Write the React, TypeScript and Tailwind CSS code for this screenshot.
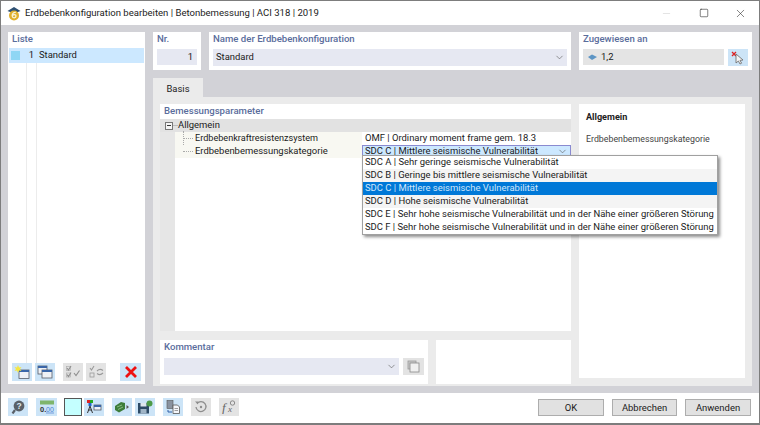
import { ChevronDown, Minus, Square, X } from 'lucide-react';

const labelCls = "text-[#5a6d9c] font-medium text-[9.6px] leading-[12px]";

const options = [
  'SDC A | Sehr geringe seismische Vulnerabilität',
  'SDC B | Geringe bis mittlere seismische Vulnerabilität',
  'SDC C | Mittlere seismische Vulnerabilität',
  'SDC D | Hohe seismische Vulnerabilität',
  'SDC E | Sehr hohe seismische Vulnerabilität und in der Nähe einer größeren Störung',
  'SDC F | Sehr hohe seismische Vulnerabilität und in der Nähe einer größeren Störung',
];

function IconBtn({ w = 'w-[20px]', off = false, children }: { w?: string; off?: boolean; children: React.ReactNode }) {
  return (
    <div className={`${w} h-[18px] flex items-center justify-center shrink-0 ${off ? 'bg-[#e3e3e3]' : 'bg-[#cce4f7]'}`}>
      <svg width="16" height="14" viewBox="0 0 16 14">{children}</svg>
    </div>
  );
}

function WindowIcon({ x, y, w = 9, h = 8 }: { x: number; y: number; w?: number; h?: number }) {
  return (
    <g>
      <rect x={x} y={y} width={w} height={h} fill="#eef1f6" stroke="#555b66" strokeWidth="0.8" />
      <rect x={x} y={y} width={w} height="2" fill="#3a66a8" />
    </g>
  );
}

export default function App() {
  return (
    <div className="w-[760px] h-[425px] flex flex-col bg-white border border-[#7d7d7d] border-b-[2px] overflow-hidden relative text-[#1a1a1a] font-['Roboto','Open_Sans',sans-serif] text-[9.45px]">
      {/* Titelleiste */}
      <div className="h-[24px] shrink-0 flex items-center pl-[6px] bg-white">
        <svg width="14" height="15" viewBox="0 0 14 15" className="mr-[4px]">
          <path d="M0.5 5 L7 1 L13.5 5 L7 7.5 Z" fill="#2f5173" />
          <circle cx="7" cy="9.5" r="5" fill="#e0b02c" />
          <path d="M8.8 6.4 C6.2 6.2 5 8 5.2 10 C5.4 12.4 9 12.4 9 10 C9 8.2 6.4 8.2 5.4 9.6" fill="none" stroke="#f8f4d8" strokeWidth="1.3" />
        </svg>
        <span className="text-[9.55px] text-[#222]">Erdbebenkonfiguration bearbeiten | Betonbemessung | ACI 318 | 2019</span>
        <div className="ml-auto flex items-center">
          <div className="w-[37px] flex justify-center"><Minus size={11} strokeWidth={1} className="text-[#c4c4c4]" /></div>
          <div className="w-[37px] flex justify-center"><Square size={10} strokeWidth={1.5} className="text-[#333]" /></div>
          <div className="w-[37px] flex justify-center"><X size={13} strokeWidth={1.1} className="text-[#333]" /></div>
        </div>
      </div>

      {/* Hauptbereich */}
      <div className="h-[368px] shrink-0 bg-[#d2d2d7] flex gap-[8px] pl-[7px] pr-[7px] pt-[7px]">
        {/* Liste */}
        <div className="w-[137px] h-[352px] bg-white flex flex-col relative">
          <div className={`${labelCls} px-[4px] pt-[1px] h-[16px]`}>Liste</div>
          <div className="h-[15px] mx-[1px] bg-[#cce8ff] flex items-center">
            <div className="w-[9px] ml-[2px] h-[9px] bg-[#8fd6f4]" />
            <span className="w-[14px] text-right">1</span>
            <span className="ml-[5px]">Standard</span>
          </div>
          <div className="flex-1 flex ml-[1px]">
            <div className="w-[18px] border-r border-[#ececec]" />
            <div className="w-[10px] border-r border-[#ececec]" />
          </div>
          <div className="h-[18px] mb-[3px] flex pl-[4px]">
            <IconBtn>
              <rect x="5" y="5" width="10" height="8.5" fill="#eef1f6" stroke="#555b66" strokeWidth="0.8" />
              <rect x="5" y="5" width="10" height="2" fill="#3a66a8" />
              <path d="M4 0 L5 2.5 L7.5 2 L6 4 L7.5 6 L5 5.5 L4 8 L3 5.5 L0.5 6 L2 4 L0.5 2 L3 2.5 Z" fill="#f5e642" />
            </IconBtn>
            <div className="w-[3px]" />
            <IconBtn>
              <WindowIcon x={1} y={1} />
              <WindowIcon x={5} y={5} w={10} />
            </IconBtn>
            <div className="w-[8px]" />
            <IconBtn off>
              <rect x="1.5" y="1.5" width="4" height="4" fill="none" stroke="#b0b0b0" strokeWidth="0.7" />
              <rect x="1.5" y="8" width="4" height="4" fill="none" stroke="#b0b0b0" strokeWidth="0.7" />
              <path d="M2 3 L3.5 5 L6 1 M2 9.5 L3.5 11.5 L6 7.5 M9 8 L11 10.5 L14.5 5.5" fill="none" stroke="#8f8f8f" strokeWidth="1.1" />
            </IconBtn>
            <div className="w-[3px]" />
            <IconBtn off>
              <path d="M2 3 L3.5 5 L6 1 M9 6 C11 4 13 4 15 5.5 M9 8.5 C11 10 13 10 15 8" fill="none" stroke="#9a9a9a" strokeWidth="1.1" />
              <rect x="2" y="8" width="4" height="4" fill="none" stroke="#9a9a9a" strokeWidth="0.8" />
            </IconBtn>
            <div className="w-[14px]" />
            <IconBtn w="w-[21px]">
              <path d="M3 2 L13 12 M13 2 L3 12" stroke="#ee1111" strokeWidth="2.8" />
            </IconBtn>
          </div>
        </div>

        {/* Rechte Seite */}
        <div className="w-[599px] flex flex-col">
          <div className="flex gap-[8px] h-[38px]">
            <div className="w-[48px] bg-white px-[4px] pt-[1px]">
              <div className={labelCls}>Nr.</div>
              <div className="mt-[4px] h-[16px] bg-[#e6e8f2] flex items-center justify-end pr-[4px]">1</div>
            </div>
            <div className="w-[362px] bg-white px-[4px] pt-[1px]">
              <div className={labelCls}>Name der Erdbebenkonfiguration</div>
              <div className="mt-[4px] h-[17px] bg-[#e6e8f2] flex items-center pl-[3px] pr-[2px]">
                <span>Standard</span>
                <ChevronDown size={11} strokeWidth={1.3} className="ml-auto text-[#555]" />
              </div>
            </div>
            <div className="w-[173px] bg-white px-[4px] pt-[1px]">
              <div className={labelCls}>Zugewiesen an</div>
              <div className="mt-[4px] flex gap-[4px]">
                <div className="w-[141px] h-[16px] bg-[#e4e4e4] flex items-center pl-[5px]">
                  <svg width="9" height="7" viewBox="0 0 9 7" className="mr-[4px]">
                    <path d="M0 3 L4 0.5 L9 3 L4 6 Z" fill="#5d95c4" />
                  </svg>
                  <span>1,2</span>
                </div>
                <div className="w-[20px] h-[17px] bg-[#cce4f7] flex items-center justify-center">
                  <svg width="14" height="14" viewBox="0 0 14 14">
                    <path d="M1 1 L5 5 M5 1 L1 5" stroke="#d22" strokeWidth="1.3" />
                    <path d="M5 3 L5 12 L7.4 10 L9 13 L10.6 12.2 L9 9.4 L12 9 Z" fill="#f4f4f4" stroke="#666" strokeWidth="0.8" />
                  </svg>
                </div>
              </div>
            </div>
          </div>

          {/* Tab */}
          <div className="mt-[8px] w-[50px] h-[19px] bg-[#ebebeb] flex items-center justify-center pt-[3px] text-[#222]">Basis</div>

          {/* Tab-Inhalt */}
          <div className="w-[599px] h-[289px] bg-[#ebebeb] flex gap-[8px] pl-[7px] pt-[7px]">
            <div className="w-[411px] flex flex-col gap-[9px]">
              <div className="h-[227px] bg-white flex flex-col relative">
                <div className={`${labelCls} h-[15px] px-[4px] pt-[1px]`}>Bemessungsparameter</div>
                <div className="h-[13px] bg-[#e2e2e2] flex items-center pl-[5px]">
                  <div className="w-[8px] h-[8px] border border-[#777] bg-[#f4f4f4] flex items-center justify-center">
                    <div className="w-[4px] h-px bg-[#333]" />
                  </div>
                  <div className="w-[5px] h-px bg-[#bbb]" />
                  <span>Allgemein</span>
                </div>
                <div className="flex-1 flex">
                  <div className="w-[15px] bg-[#e6e6e6]" />
                  <div className="flex-1 flex flex-col">
                    <div className="h-[13px] flex">
                      <div className="w-[187px] bg-[#f8f8f2] pl-[20px] flex items-center relative text-[9.1px]">
                        <div className="absolute left-[8px] top-[-1px] h-[20px] border-l border-dotted border-[#aaa]" />
                        <div className="w-[10px] absolute left-[8px] top-[6px] border-t border-dotted border-[#aaa]" />
                        Erdbebenkraftresistenzsystem
                      </div>
                      <div className="flex-1 pl-[3px] flex items-center">OMF | Ordinary moment frame gem. 18.3</div>
                    </div>
                    <div className="h-[13px] flex">
                      <div className="w-[187px] bg-[#f8f8f2] pl-[20px] flex items-center relative">
                        <div className="w-[10px] absolute left-[8px] top-[6px] border-t border-dotted border-[#aaa]" />
                        Erdbebenbemessungskategorie
                      </div>
                      <div className="flex-1 bg-[#cce8ff] border border-[#8a8ad0] pl-[2px] flex items-center">
                        <span>SDC C | Mittlere seismische Vulnerabilität</span>
                        <ChevronDown size={11} strokeWidth={1.3} className="ml-auto mr-[2px] text-[#555]" />
                      </div>
                    </div>
                  </div>
                </div>
              </div>
              <div className="flex gap-[8px] h-[44px]">
                <div className="w-[268px] bg-white px-[4px] pt-[1px]">
                  <div className={labelCls}>Kommentar</div>
                  <div className="mt-[5px] flex gap-[4px]">
                    <div className="w-[235px] h-[17px] bg-[#e6e8f2] flex items-center justify-end pr-[2px]">
                      <ChevronDown size={11} strokeWidth={1.3} className="text-[#555]" />
                    </div>
                    <div className="w-[21px] h-[17px] bg-[#e3e3e3] flex items-center justify-center">
                      <svg width="14" height="13" viewBox="0 0 14 13">
                        <rect x="1" y="1" width="8" height="8" fill="#c8c8c8" stroke="#999" strokeWidth="0.8" />
                        <rect x="3" y="3" width="9" height="9" fill="#f0f0f0" stroke="#888" strokeWidth="0.8" />
                      </svg>
                    </div>
                  </div>
                </div>
                <div className="w-[135px] bg-white" />
              </div>
            </div>
            <div className="w-[166px] h-[274px] bg-white px-[7px] pt-[7px]">
              <div className="font-bold text-[9.1px] text-[#222] leading-[13px]">Allgemein</div>
              <div className="mt-[9px] text-[8.8px] text-[#444] leading-[13px]">Erdbebenbemessungskategorie</div>
            </div>
          </div>
        </div>
      </div>

      {/* Fußleiste */}
      <div className="flex-1 flex items-start pl-[7px] pt-[5px] relative">
        <IconBtn w="w-[20px]">
          <circle cx="9" cy="6" r="5.4" fill="#5a6068" />
          <path d="M5 10 L2.5 13.5" stroke="#5a6068" strokeWidth="2.2" />
          <text x="9" y="9" fontSize="8.5" fontWeight="700" fill="#dfe8f0" textAnchor="middle" fontFamily="Liberation Sans">?</text>
        </IconBtn>
        <div className="w-[8px]" />
        <IconBtn w="w-[21px]">
          <rect x="1" y="0.5" width="14" height="4" fill="#7fb56c" />
          <text x="1" y="12" fontSize="7.5" fill="#333" fontWeight="700" fontFamily="Liberation Sans">0.</text>
          <text x="7" y="12" fontSize="7" fill="#4a7fd0" fontFamily="Liberation Sans">00</text>
          <path d="M7 13 L15 13" stroke="#4a7fd0" strokeWidth="0.7" />
        </IconBtn>
        <div className="w-[7px]" />
        <div className="w-[18px] h-[18px] bg-[#c4ffff] border border-[#555]" />
        <div className="w-[2px]" />
        <IconBtn>
          <rect x="1" y="0" width="3" height="3" fill="#d22" />
          <rect x="4" y="0" width="3" height="3" fill="#2a2" />
          <rect x="2.5" y="3" width="3" height="3" fill="#26c" />
          <path d="M4 6 L1.5 13 M4 6 L6.5 13 M2.5 10 L5.5 10" stroke="#333" strokeWidth="1" />
          <WindowIcon x={8} y={5} w={7} h={5} />
        </IconBtn>
        <div className="w-[8px]" />
        <IconBtn>
          <path d="M1 6 L7 2 L11 3 L11 9 L5 12.5 L1 10 Z" fill="#3d7d3a" />
          <path d="M3 7 L8 5 M4 9.5 L9 7" stroke="#9ccb95" strokeWidth="0.8" />
          <path d="M12.5 5 L15 7 L12.5 9 Z" fill="#555" />
        </IconBtn>
        <div className="w-[3px]" />
        <IconBtn>
          <rect x="1" y="3" width="11" height="10.5" fill="#2d4a66" />
          <rect x="3.5" y="3" width="6" height="3.5" fill="#dfe6ee" />
          <rect x="3.5" y="9" width="6" height="4.5" fill="#9fb4c6" />
          <circle cx="12.5" cy="3.5" r="3" fill="#4d9a48" />
        </IconBtn>
        <div className="w-[8px]" />
        <IconBtn>
          <rect x="2" y="0.5" width="6" height="8" fill="#8a93a0" stroke="#555" strokeWidth="0.6" />
          <path d="M8 5 L12.5 5 L14.5 7 L14.5 13.5 L8 13.5 Z" fill="#f4f6fa" stroke="#555" strokeWidth="0.8" />
          <path d="M9.5 8.5 L13 8.5 M9.5 10.5 L13 10.5" stroke="#777" strokeWidth="0.7" />
          <path d="M3 10 L3 12 L7 12" fill="none" stroke="#2f5fa8" strokeWidth="1" />
        </IconBtn>
        <div className="w-[8px]" />
        <IconBtn off>
          <path d="M4 3.5 A5 5 0 1 1 3 7" fill="none" stroke="#8d8d8d" strokeWidth="1.3" />
          <path d="M2 1.5 L5 1.5 L5 4.5 Z" fill="#8d8d8d" />
          <circle cx="8" cy="7" r="1.2" fill="#8d8d8d" />
        </IconBtn>
        <div className="w-[8px]" />
        <IconBtn off>
          <text x="1" y="12" fontSize="13" fontStyle="italic" fontFamily="Liberation Serif" fill="#666">f</text>
          <text x="7" y="12" fontSize="9" fontStyle="italic" fontFamily="Liberation Serif" fill="#666">x</text>
          <circle cx="11.5" cy="3" r="2.2" fill="none" stroke="#808080" strokeWidth="0.9" />
        </IconBtn>

        <div className="ml-auto mr-[8px] mt-[1px] flex gap-[8px]">
          <button className="w-[66px] h-[17px] bg-[#e1e1e1] border border-[#adadad] leading-none">OK</button>
          <button className="w-[65px] h-[17px] bg-[#e1e1e1] border border-[#adadad] leading-none">Abbrechen</button>
          <button className="w-[66px] h-[17px] bg-[#e1e1e1] border border-[#adadad] leading-none">Anwenden</button>
        </div>
      </div>

      {/* Aufgeklappte Liste */}
      <div className="absolute left-[361px] top-[154px] w-[356px] bg-white border border-[#a0a0a0] shadow-[2px_2px_3px_rgba(0,0,0,0.45)]">
        {options.map((o, i) => (
          <div
            key={o}
            className={`h-[13px] pl-[2px] flex items-center whitespace-nowrap ${i === 2 ? 'bg-[#0078d7] text-[#cfe6fa]' : i === 1 || i === 3 ? 'bg-[#f4f4f4]' : ''}`}
          >
            {o}
          </div>
        ))}
      </div>
    </div>
  );
}
